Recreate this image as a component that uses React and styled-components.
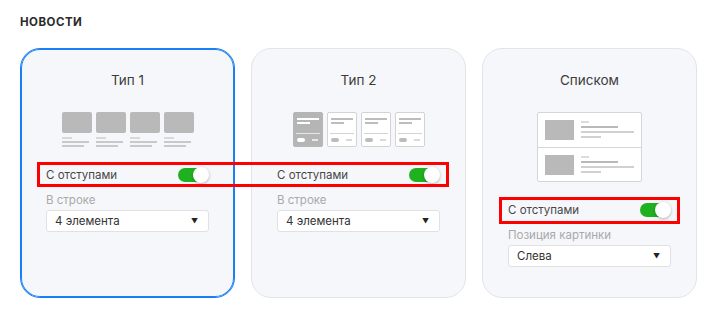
import React from "react";
import styled, { createGlobalStyle } from "styled-components";

const Global = createGlobalStyle`
  html, body { margin: 0; padding: 0; background: #fff; }
  body { font-family: Inter, "Noto Sans", sans-serif; color: #333; }
`;

const Page = styled.div`
  position: relative;
  padding: 14px 20px 0 20px;
  width: 711px;
  height: 318px;
  box-sizing: border-box;
`;

const Heading = styled.h2`
  margin: 0 0 18px 0;
  font-size: 11.5px;
  line-height: 16px;
  font-weight: 700;
  letter-spacing: 0.5px;
  color: #2b2b2b;
`;

const Cards = styled.div`
  display: grid;
  grid-template-columns: repeat(3, 215px);
  column-gap: 16px;
`;

const Card = styled.div`
  box-sizing: border-box;
  height: 250px;
  border-radius: 20px;
  background: #f6f7fb;
  border: 1px solid ${(p) => (p.$active ? "#1a7ff5" : "#e3e4e9")};
  box-shadow: ${(p) => (p.$active ? "inset 0 0 0 1px #1a7ff5" : "none")};
  padding: 23px 25px 0 25px;
  display: flex;
  flex-direction: column;
`;

const CardTitle = styled.div`
  text-align: center;
  font-size: 13.5px;
  line-height: 16px;
  color: #3c3c3c;
`;

const PreviewArea = styled.div`
  margin-top: 24px;
  display: flex;
  justify-content: center;
`;

const TileRow = styled.div`
  display: flex;
  gap: 4px;
`;

const NewsTile = styled.div`
  width: 30px;
  display: flex;
  flex-direction: column;
`;

const Thumb = styled.div`
  width: 30px;
  height: 21px;
  border-radius: 2px;
  background: #b9b9b9;
  margin-bottom: 4px;
`;

const Line = styled.div`
  height: 2px;
  width: ${(p) => p.$w}px;
  background: ${(p) => p.$c || "#c9c9c9"};
  margin-bottom: ${(p) => (p.$mb != null ? p.$mb : 2)}px;
`;

const CardTile = styled.div`
  box-sizing: border-box;
  width: 30px;
  height: 35px;
  border-radius: 2px;
  background: ${(p) => (p.$filled ? "#b5b5b5" : "#fff")};
  border: 1px solid ${(p) => (p.$filled ? "#b5b5b5" : "#d3d3d3")};
  padding: 5px 2px 0 3px;
  display: flex;
  flex-direction: column;
`;

const Divider = styled.div`
  height: 1px;
  margin: 9px 0 0 -1px;
  background: ${(p) => (p.$filled ? "#e6e6e6" : "#d3d3d3")};
`;

const TileFoot = styled.div`
  display: flex;
  justify-content: space-between;
  align-items: center;
  margin-top: 4px;
  padding-right: 2px;
`;

const Pill = styled.div`
  width: 8px;
  height: 4px;
  border-radius: 2px;
  background: ${(p) => (p.$filled ? "#fff" : "#bcbcbc")};
`;

const Dash = styled.div`
  width: 6px;
  height: 1.5px;
  background: ${(p) => (p.$filled ? "#e8e8e8" : "#dadada")};
`;

const ListBox = styled.div`
  box-sizing: border-box;
  width: 105px;
  height: 70px;
  background: #fff;
  border: 1px solid #d6d6d6;
  border-radius: 2px;
  display: flex;
  flex-direction: column;
`;

const ListRow = styled.div`
  flex: 1;
  display: flex;
  padding: 7px 0 0 7px;
  gap: 7px;
  border-top: ${(p) => (p.$first ? "none" : "1px solid #d6d6d6")};
`;

const ListThumb = styled.div`
  width: 29px;
  height: 20px;
  background: #b9b9b9;
`;

const ListLines = styled.div`
  display: flex;
  flex-direction: column;
  padding-top: 1px;
`;

const ToggleRow = styled.div`
  position: relative;
  margin-top: 17px;
  height: 22px;
  display: flex;
  align-items: center;
  justify-content: space-between;
  font-size: 11.5px;
  color: #474747;
`;

const Toggle = styled.div`
  position: relative;
  width: 31px;
  height: 16px;
  display: flex;
  align-items: center;
`;

const Track = styled.div`
  width: 27px;
  height: 14px;
  border-radius: 7px;
  background: #1fb11f;
`;

const Knob = styled.div`
  position: absolute;
  right: 0;
  top: 0;
  width: 16px;
  height: 16px;
  border-radius: 50%;
  background: #fff;
  box-shadow: 0 1px 3px rgba(0, 0, 0, 0.3);
`;

const FieldLabel = styled.div`
  margin-top: 6px;
  font-size: 11.5px;
  line-height: 16px;
  color: #a9a9a9;
`;

const Select = styled.div`
  box-sizing: border-box;
  margin-top: 2px;
  height: 22px;
  background: #fff;
  border: 1px solid #e1e1e4;
  border-radius: 3px;
  padding: 0 10px 0 8px;
  display: flex;
  align-items: center;
  justify-content: space-between;
  font-size: 11.5px;
  color: #333;
`;

const Arrow = styled.span`
  font-size: 7px;
  color: #222;
`;

const Highlight = styled.div`
  position: absolute;
  box-sizing: border-box;
  border: 3px solid #ff0000;
  pointer-events: none;
`;

const WideHighlight = styled(Highlight)`
  left: 37px;
  top: 162px;
  width: 412px;
  height: 25px;
`;

const RowHighlight = styled(Highlight)`
  left: -9px;
  right: -9px;
  top: -2px;
  bottom: -3px;
`;

function Switch() {
  return (
    <Toggle>
      <Track />
      <Knob />
    </Toggle>
  );
}

function Type1Preview() {
  return (
    <TileRow>
      {[0, 1, 2, 3].map((i) => (
        <NewsTile key={i}>
          <Thumb />
          <Line $w={10} $c="#d9d9d9" />
          <Line $w={27} />
          <Line $w={22} $mb={0} />
        </NewsTile>
      ))}
    </TileRow>
  );
}

function Type2Preview() {
  return (
    <TileRow>
      {[true, false, false, false].map((f, i) => (
        <CardTile key={i} $filled={f}>
          <Line $w={22} $c={f ? "#fff" : "#bdbdbd"} />
          <Line $w={13} $c={f ? "#fff" : "#bdbdbd"} $mb={0} />
          <Divider $filled={f} />
          <TileFoot>
            <Pill $filled={f} />
            <Dash $filled={f} />
          </TileFoot>
        </CardTile>
      ))}
    </TileRow>
  );
}

function ListPreview() {
  return (
    <ListBox>
      {[true, false].map((first, i) => (
        <ListRow key={i} $first={first}>
          <ListThumb />
          <ListLines>
            <Line $w={8} $c="#dcdcdc" $mb={3} />
            <Line $w={37} $c="#b9b9b9" $mb={3} />
            <Line $w={53} $c="#d0d0d0" $mb={3} />
            <Line $w={20} $c="#d0d0d0" $mb={0} />
          </ListLines>
        </ListRow>
      ))}
    </ListBox>
  );
}

export default function App() {
  return (
    <>
      <Global />
      <Page>
        <Heading>НОВОСТИ</Heading>
        <Cards>
          <Card $active>
            <CardTitle>Тип 1</CardTitle>
            <PreviewArea>
              <Type1Preview />
            </PreviewArea>
            <ToggleRow>
              <span>С отступами</span>
              <Switch />
            </ToggleRow>
            <FieldLabel>В строке</FieldLabel>
            <Select>
              <span>4 элемента</span>
              <Arrow>▼</Arrow>
            </Select>
          </Card>
          <Card>
            <CardTitle>Тип 2</CardTitle>
            <PreviewArea>
              <Type2Preview />
            </PreviewArea>
            <ToggleRow>
              <span>С отступами</span>
              <Switch />
            </ToggleRow>
            <FieldLabel>В строке</FieldLabel>
            <Select>
              <span>4 элемента</span>
              <Arrow>▼</Arrow>
            </Select>
          </Card>
          <Card>
            <CardTitle>Списком</CardTitle>
            <PreviewArea>
              <ListPreview />
            </PreviewArea>
            <ToggleRow>
              <span>С отступами</span>
              <Switch />
              <RowHighlight />
            </ToggleRow>
            <FieldLabel>Позиция картинки</FieldLabel>
            <Select>
              <span>Слева</span>
              <Arrow>▼</Arrow>
            </Select>
          </Card>
        </Cards>
        <WideHighlight />
      </Page>
    </>
  );
}
